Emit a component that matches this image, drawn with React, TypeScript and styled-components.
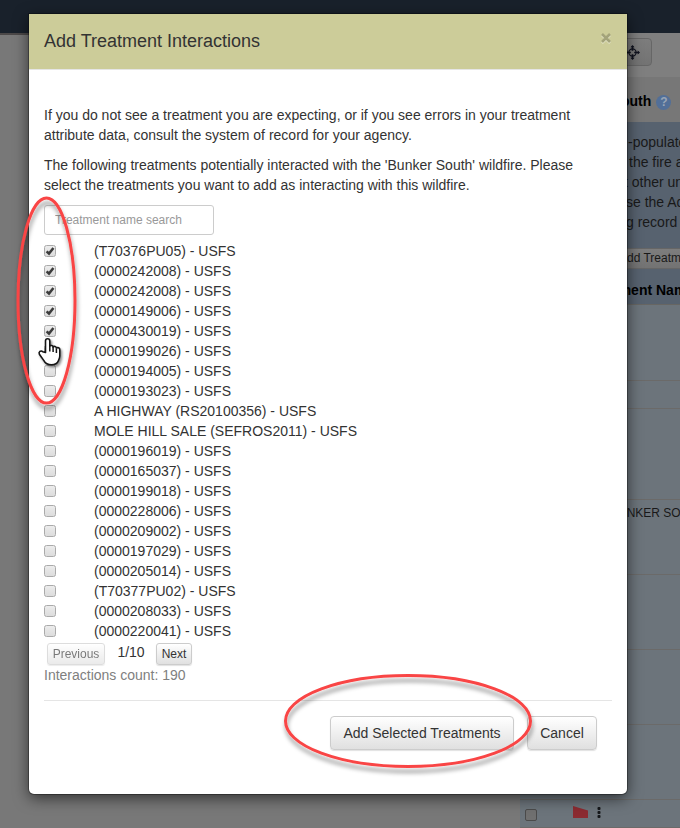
import React from 'react';
import styled, { createGlobalStyle } from 'styled-components';

const Global = createGlobalStyle`
  * { box-sizing: border-box; }
  body { margin: 0; background: #787878; overflow: hidden; }
  #root { font: 14px/20px "Liberation Sans", Arial, sans-serif; color: #333; }
  p { margin: 0 0 10px; }
`;

const Screen = styled.div`
  position: relative;
  width: 680px;
  height: 828px;
  overflow: hidden;
`;

const NavBar = styled.div`
  height: 35px;
  background: #19212b;
  border-bottom: 2px solid #4b4848;
`;

const SidePanel = styled.aside`
  width: 160px;
  margin-left: 520px;
  height: 795px;
  margin-top: -2px;
  position: relative;
  background: #6c747b;
  white-space: nowrap;
  color: #191919;
`;

const ToolStrip = styled.div`
  height: 44px;
  padding: 5px 0 0 90px;
  background: #7f7f7f;
`;

const MapButton = styled.div`
  width: 42px;
  height: 28px;
  display: flex;
  align-items: center;
  padding: 1px 0 0 14px;
  border: 1px solid #666;
  border-radius: 4px;
  background: linear-gradient(#7d7d7d, #737373);
`;

const PanelTitle = styled.div`
  height: 45px;
  display: flex;
  align-items: center;
  padding: 3px 0 0 101px;
  gap: 5px;
  color: #000;
  font-weight: bold;
  background: #777;
`;

const HelpDot = styled.span`
  width: 15px;
  height: 15px;
  margin-top: 2px;
  border-radius: 50%;
  background: #526f98;
  color: #99a5b5;
  font-size: 12px;
  line-height: 15px;
  text-align: center;
`;

const Notice = styled.div`
  height: 148px;
  padding-top: 10px;
  background: #57626f;
`;

const NoticeLine = styled.div<{ $left: number }>`
  padding-left: ${(p) => p.$left}px;
`;

const SmallBar = styled.div`
  height: 21px;
  margin: 16px 0 0 90px;
  border: 1px solid #666;
  border-right: 0;
  background: linear-gradient(#7d7d7d, #737373);
  font-size: 12px;
  line-height: 19px;
  padding-left: 8px;
`;

const ColumnHead = styled.div`
  height: 35px;
  padding: 10px 0 0 94px;
  background: #57626f;
  border-bottom: 1px solid #676663;
  color: #000;
  font-weight: bold;
`;

const RecordRow = styled.div<{ $h: number }>`
  height: ${(p) => p.$h}px;
  border-bottom: 1px solid #6b6a69;
  font-size: 12px;
  padding: 3px 0 0 98px;
`;

const LastRecord = styled.div`
  height: 28px;
  display: flex;
  align-items: center;
  padding-left: 5px;
  border-bottom: 1px solid #6b6a69;
`;

const DimCheck = styled.span`
  width: 12px;
  height: 12px;
  margin-top: 3px;
  border: 1px solid #4b4b4b;
  border-radius: 2px;
  background: #707070;
`;

const Modal = styled.section`
  position: absolute;
  left: 29px;
  top: 14px;
  width: 598px;
  height: 780px;
  background: #fff;
  border-radius: 0 0 5px 5px;
  box-shadow: 0 0 0 1px rgba(0, 0, 0, 0.3), 0 4px 15px rgba(0, 0, 0, 0.6);
`;

const Header = styled.header`
  height: 56px;
  display: flex;
  justify-content: space-between;
  padding: 17px 15px 0;
  background: #cccc99;
  border-bottom: 1px solid #e5e5e5;
`;

const Title = styled.h4`
  margin: 0;
  font-size: 18px;
  line-height: 20px;
  font-weight: 400;
`;

const CloseIcon = styled.svg`
  margin: 2px 1px 0 0;
`;

const Body = styled.div`
  padding: 35px 15px 0;
`;

const Search = styled.input`
  display: block;
  width: 170px;
  height: 30px;
  padding: 0 10px;
  border: 1px solid #ccc;
  border-radius: 3px;
  font: 12px "Liberation Sans", Arial, sans-serif;
  margin-bottom: 6px;
  &::placeholder { color: #999; opacity: 1; }
`;

const Treatment = styled.label`
  height: 20px;
  display: flex;
  align-items: center;
  gap: 38px;
`;

const Check = styled.span`
  width: 12px;
  height: 12px;
  flex: none;
  display: flex;
  border: 1px solid #aaa;
  border-radius: 2.5px;
  background: linear-gradient(#ececec, #dcdcdc);
  svg { width: 10px; height: 10px; }
`;

const Pager = styled.div`
  display: flex;
  padding: 2px 0 0 3px;
  height: 24px;
`;

const PageNumber = styled.span`
  width: 51px;
  margin-top: -1px;
  padding-left: 1px;
  text-align: center;
`;

const Button = styled.button<{ $w: number; $small?: boolean; $dim?: boolean }>`
  width: ${(p) => p.$w}px;
  height: ${(p) => (p.$small ? 22 : 34)}px;
  padding: 0;
  white-space: nowrap;
  border: 1px solid #ccc;
  border-radius: ${(p) => (p.$small ? 3 : 4)}px;
  background: linear-gradient(#fff, #e0e0e0);
  box-shadow: 0 1px 1px rgba(0, 0, 0, 0.12);
  color: #333;
  opacity: ${(p) => (p.$dim ? 0.65 : 1)};
  font: ${(p) => (p.$small ? 12 : 14)}px "Liberation Sans", Arial, sans-serif;
`;

const Count = styled.div`
  color: #808080;
`;

const Footer = styled.footer`
  margin: 15px 15px 0;
  padding: 15px 15px 0 0;
  border-top: 1px solid #e5e5e5;
  display: flex;
  justify-content: flex-end;
  gap: 13px;
`;

const Markup = styled.svg`
  position: absolute;
  inset: 0;
  pointer-events: none;
`;

const treatments = [
  '(T70376PU05)', '(0000242008)', '(0000242008)', '(0000149006)', '(0000430019)',
  '(0000199026)', '(0000194005)', '(0000193023)', 'A HIGHWAY (RS20100356)',
  'MOLE HILL SALE (SEFROS2011)', '(0000196019)', '(0000165037)', '(0000199018)',
  '(0000228006)', '(0000209002)', '(0000197029)', '(0000205014)', '(T70377PU02)',
  '(0000208033)', '(0000220041)',
];

const Crosshair = () => (
  <svg width="15" height="15" viewBox="0 0 15 15" fill="none" stroke="#10131f">
    <circle cx="7.500" cy="7.500" r="3.600" strokeWidth="1.200" />
    <path d="M7.500 1v4.800M7.500 9.200V14M1 7.500h4.800M9.200 7.500H14" strokeWidth="1.700" />
    <path d="M7.500 0l2 2.300h-4zM7.500 15l2-2.300h-4zM0 7.500l2.300-2v4zM15 7.500l-2.300-2v4z" fill="#10131f" stroke="none" />
  </svg>
);

const RecordIcons = () => (
  <svg width="32" height="16" viewBox="0 0 32 16">
    <path d="M0 1 15 5.500V13H0z" fill="#8c2b31" />
    <g fill="#15181b">
      <rect x="24.500" y="2" width="3" height="3" rx="1" />
      <rect x="24.500" y="6" width="3" height="3" rx="1" />
      <rect x="24.500" y="10" width="3" height="3" rx="1" />
    </g>
  </svg>
);

const IconSlot = styled.span`
  margin: -2px 0 0 36px;
  height: 16px;
  display: flex;
`;

export default function App() {
  return (
    <>
      <Global />
      <Screen>
        <NavBar />
        <SidePanel>
          <ToolStrip><MapButton><Crosshair /></MapButton></ToolStrip>
          <PanelTitle>outh <HelpDot>?</HelpDot></PanelTitle>
          <Notice>
            <NoticeLine $left={108}>-populated</NoticeLine>
            <NoticeLine $left={109}>the fire and</NoticeLine>
            <NoticeLine $left={104}>t other units</NoticeLine>
            <NoticeLine $left={106}>se the Add</NoticeLine>
            <NoticeLine $left={106}>g record of</NoticeLine>
            <SmallBar>Add Treatment</SmallBar>
          </Notice>
          <ColumnHead>tment Name</ColumnHead>
          <RecordRow $h={76} />
          <RecordRow $h={28} />
          <RecordRow $h={91} />
          <RecordRow $h={75}>UNKER SOUTH</RecordRow>
          <RecordRow $h={75} />
          <RecordRow $h={75} />
          <RecordRow $h={75} />
          <LastRecord><DimCheck /><IconSlot><RecordIcons /></IconSlot></LastRecord>
        </SidePanel>
        <Modal>
          <Header>
            <Title>Add Treatment Interactions</Title>
            <CloseIcon width="10" height="11" viewBox="0 0 10 11">
              <path d="M1 2l8 8M9 2l-8 8" stroke="#e6e6cc" strokeWidth="2.500" />
              <path d="M1 1l8 8M9 1l-8 8" stroke="#a3a37a" strokeWidth="2.600" />
            </CloseIcon>
          </Header>
          <Body>
            <p>If you do not see a treatment you are expecting, or if you see errors in your treatment<br />attribute data, consult the system of record for your agency.</p>
            <p>The following treatments potentially interacted with the 'Bunker South' wildfire. Please<br />select the treatments you want to add as interacting with this wildfire.</p>
            <Search placeholder="Treatment name search" />
            {treatments.map((name, i) => (
              <Treatment key={i}>
                <Check>
                  {i < 5 && (
                    <svg viewBox="0 0 10 10"><path d="M1.600 5.300 4 7.600 8.400 2" fill="none" stroke="#3c3c3c" strokeWidth="2.500" /></svg>
                  )}
                </Check>
                {name} - USFS
              </Treatment>
            ))}
            <Pager>
              <Button $w={58} $small $dim>Previous</Button>
              <PageNumber>1/10</PageNumber>
              <Button $w={36} $small>Next</Button>
            </Pager>
            <Count>Interactions count: 190</Count>
          </Body>
          <Footer>
            <Button $w={184}>Add Selected Treatments</Button>
            <Button $w={70}>Cancel</Button>
          </Footer>
        </Modal>
        <Markup width="680" height="828" viewBox="0 0 680 828">
          <defs>
            <filter id="shade" x="-20%" y="-20%" width="140%" height="140%">
              <feDropShadow dx="1" dy="5" stdDeviation="2" floodColor="#000" floodOpacity="0.4" />
            </filter>
            <filter id="handShade" x="-20%" y="-20%" width="150%" height="150%">
              <feDropShadow dx="1.500" dy="2" stdDeviation="1.200" floodColor="#000" floodOpacity="0.45" />
            </filter>
          </defs>
          <g fill="none" stroke="#f94545" strokeWidth="3" filter="url(#shade)">
            <ellipse cx="46.500" cy="300.500" rx="28.500" ry="102.500" />
            <ellipse cx="408" cy="721" rx="122.500" ry="45.500" />
          </g>
          <path
            filter="url(#handShade)"
            d="M45.500 352.500V341c0-3 4.300-3 4.300 0V346c1-1 3-.6 3.300 1 1.200-1 3-.5 3.300 1 1.300-.9 3.400-.2 3.400 1.800v6.200c0 2-.8 3.500-1.400 4.800-1 2.800-3.400 4-6.900 4-4 0-6.200-1.500-7.600-4.200l-4.500-6.300c-1.200-2.500 1.500-4.300 3.300-2.600z"
            fill="#fff" stroke="#151515" strokeWidth="1.600" strokeLinejoin="round"
          />
          <path d="M49.800 346v5.500M53.100 347v5M56.400 348.500v4.500" stroke="#151515" strokeWidth="1.500" />
        </Markup>
      </Screen>
    </>
  );
}
